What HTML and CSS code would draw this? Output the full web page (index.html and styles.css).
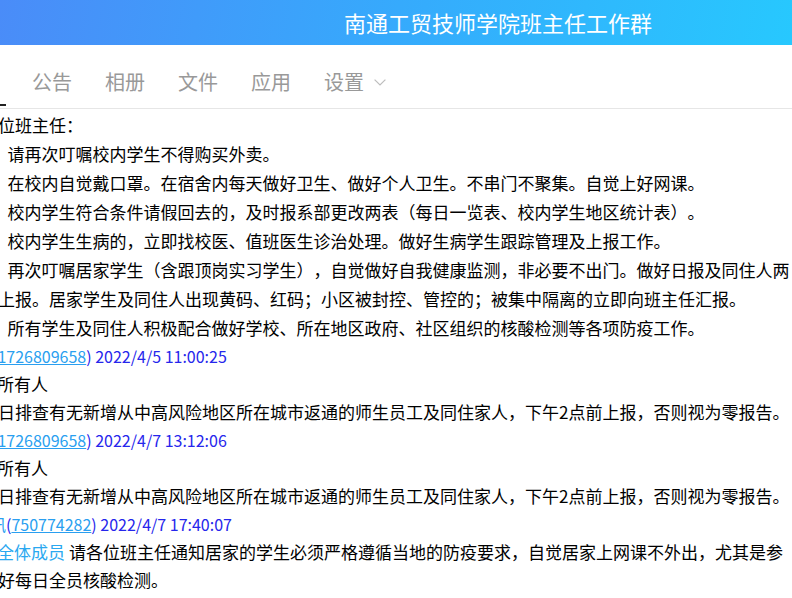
FILE: index.html
```html
<!DOCTYPE html>
<html lang="zh-CN">
<head>
    <meta charset="UTF-8">
    <meta name="viewport" content="width=device-width, initial-scale=1.0">
    <title>南通工贸技师学院班主任工作群 - 公告</title>
    <link rel="stylesheet" href="styles.css">
</head>
<body>

    <!-- group header -->
    <header class="top-bar">
        <h1 class="group-title">南通工贸技师学院班主任工作群</h1>
    </header>

    <!-- group tabs -->
    <nav class="tabs">
        <a class="tab" href="#">公告</a>
        <a class="tab" href="#">相册</a>
        <a class="tab" href="#">文件</a>
        <a class="tab" href="#">应用</a>
        <a class="tab tab-more" href="#">设置
            <svg class="chevron" width="12" height="7" viewBox="0 0 12 7">
                <path d="M0.6 0.6 L6 6 L11.4 0.6" fill="none" stroke="#bdbdbd" stroke-width="1.2"/>
            </svg>
        </a>
    </nav>

    <!-- notice list -->
    <main class="board">
        <div class="board-inner">
            <div class="msg-text first">
                各位班主任：<br>
                1、请再次叮嘱校内学生不得购买外卖。<br>
                2、在校内自觉戴口罩。在宿舍内每天做好卫生、做好个人卫生。不串门不聚集。自觉上好网课。<br>
                3、校内学生符合条件请假回去的，及时报系部更改两表（每日一览表、校内学生地区统计表）。<br>
                4、校内学生生病的，立即找校医、值班医生诊治处理。做好生病学生跟踪管理及上报工作。<br>
                5、再次叮嘱居家学生（含跟顶岗实习学生），自觉做好自我健康监测，非必要不出门。做好日报及同住人两<br>
                码上报。居家学生及同住人出现黄码、红码；小区被封控、管控的；被集中隔离的立即向班主任汇报。<br>
                6、所有学生及同住人积极配合做好学校、所在地区政府、社区组织的核酸检测等各项防疫工作。
            </div>

            <div class="msg-meta meta-qq">(<a class="qq" href="#">1726809658</a>) 2022/4/5 11:00:25</div>
            <div class="msg-text">
                @所有人<br>
                每日排查有无新增从中高风险地区所在城市返通的师生员工及同住家人，下午2点前上报，否则视为零报告。
            </div>

            <div class="msg-meta meta-qq">(<a class="qq" href="#">1726809658</a>) 2022/4/7 13:12:06</div>
            <div class="msg-text">
                @所有人<br>
                每日排查有无新增从中高风险地区所在城市返通的师生员工及同住家人，下午2点前上报，否则视为零报告。
            </div>

            <div class="msg-meta"><span class="nick">讯</span>(<a class="qq" href="#">750774282</a>) 2022/4/7 17:40:07</div>
            <div class="msg-text">
                <span class="at">@全体成员</span> 请各位班主任通知居家的学生必须严格遵循当地的防疫要求，自觉居家上网课不外出，尤其是参<br>
                做好每日全员核酸检测。
            </div>
        </div>
    </main>

</body>
</html>
```

FILE: styles.css
```css
html, body {
    margin: 0;
    padding: 0;
}
body {
    font-family: "Noto Sans CJK SC", "Noto Sans", sans-serif;
    background-color: #fff;
    color: #000;
    width: 792px;
    height: 598px;
    overflow: hidden;
}
.top-bar {
    height: 45px;
    background: linear-gradient(100deg, #4a8cf8 0%, #36aafc 50%, #27c8fe 100%);
    display: flex;
    align-items: center;
    padding-left: 344px;
}
.group-title {
    margin: 0;
    font-size: 22px;
    font-weight: normal;
    color: #fff;
    line-height: 1;
    padding-bottom: 2px;
}
.tabs {
    position: relative;
    height: 64px;
    box-sizing: border-box;
    border-bottom: 1px solid #e6e6e6;
    display: flex;
    align-items: flex-end;
    gap: 33px;
    padding: 0 0 13px 32px;
}
/* active underline of the tab that is scrolled off to the left */
.tabs::before {
    content: "";
    position: absolute;
    left: 0;
    bottom: 2px;
    width: 6px;
    height: 2px;
    background-color: #222;
}
.tab {
    font-size: 20px;
    line-height: 26px;
    color: #999;
    text-decoration: none;
}
.tab-more {
    display: flex;
    align-items: center;
}
.chevron {
    margin-left: 10px;
    margin-top: 1px;
}
.board {
    overflow: hidden;
}
.board-inner {
    margin-left: -19px;
    font-size: 17px;
    white-space: nowrap;
    text-spacing-trim: space-all;
}
.msg-text {
    line-height: 28px;
}
.msg-text.first {
    line-height: 29px;
    padding-top: 1px;
}
.msg-meta {
    font-size: 16px;
    line-height: 28px;
    color: #2626ec;
    text-indent: 9px;
}
.meta-qq {
    text-indent: 11px;
}
.nick {
    color: #2a9ff0;
}
.qq {
    color: #2a9ff0;
    text-decoration: underline;
}
.at {
    color: #2aa8f0;
}
```
